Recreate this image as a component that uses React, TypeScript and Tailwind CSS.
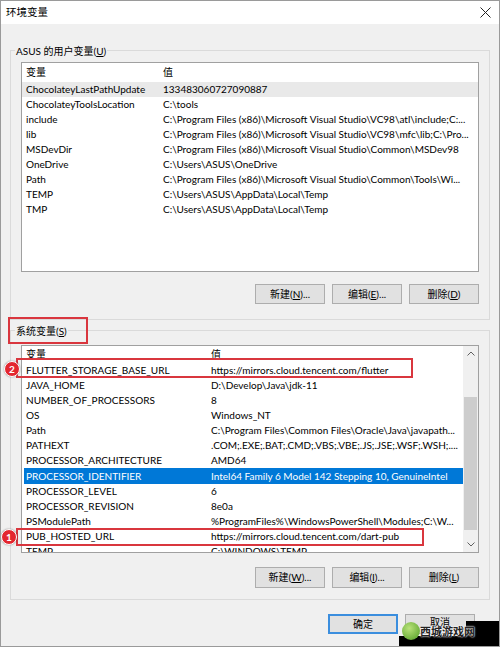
import React from "react";

type Row = [string, string];

const userVars: Row[] = [
  ["ChocolateyLastPathUpdate", "133483060727090887"],
  ["ChocolateyToolsLocation", "C:\\tools"],
  ["include", "C:\\Program Files (x86)\\Microsoft Visual Studio\\VC98\\atl\\include;C:..."],
  ["lib", "C:\\Program Files (x86)\\Microsoft Visual Studio\\VC98\\mfc\\lib;C:\\Pro..."],
  ["MSDevDir", "C:\\Program Files (x86)\\Microsoft Visual Studio\\Common\\MSDev98"],
  ["OneDrive", "C:\\Users\\ASUS\\OneDrive"],
  ["Path", "C:\\Program Files (x86)\\Microsoft Visual Studio\\Common\\Tools\\Wi..."],
  ["TEMP", "C:\\Users\\ASUS\\AppData\\Local\\Temp"],
  ["TMP", "C:\\Users\\ASUS\\AppData\\Local\\Temp"],
];

const sysVars: Row[] = [
  ["FLUTTER_STORAGE_BASE_URL", "https://mirrors.cloud.tencent.com/flutter"],
  ["JAVA_HOME", "D:\\Develop\\Java\\jdk-11"],
  ["NUMBER_OF_PROCESSORS", "8"],
  ["OS", "Windows_NT"],
  ["Path", "C:\\Program Files\\Common Files\\Oracle\\Java\\javapath..."],
  ["PATHEXT", ".COM;.EXE;.BAT;.CMD;.VBS;.VBE;.JS;.JSE;.WSF;.WSH;...."],
  ["PROCESSOR_ARCHITECTURE", "AMD64"],
  ["PROCESSOR_IDENTIFIER", "Intel64 Family 6 Model 142 Stepping 10, GenuineIntel"],
  ["PROCESSOR_LEVEL", "6"],
  ["PROCESSOR_REVISION", "8e0a"],
  ["PSModulePath", "%ProgramFiles%\\WindowsPowerShell\\Modules;C:\\W..."],
  ["PUB_HOSTED_URL", "https://mirrors.cloud.tencent.com/dart-pub"],
  ["TEMP", "C:\\WINDOWS\\TEMP"],
];

function WinButton({
  text,
  hotkey,
  dots,
  tall,
}: {
  text: string;
  hotkey: string;
  dots?: boolean;
  tall?: boolean;
}) {
  return (
    <div
      className={`w-[70px] ${tall ? "h-[21px]" : "h-[20px]"} border border-[#adadad] bg-[#e1e1e1] flex items-center justify-center`}
    >
      <span>
        {text}(<span className="underline">{hotkey}</span>){dots ? "..." : ""}
      </span>
    </div>
  );
}

function Chevron({ down }: { down?: boolean }) {
  return (
    <svg width="8" height="5" viewBox="0 0 8 5">
      <polyline
        points={down ? "0.5,0.5 4,4 7.5,0.5" : "0.5,4.5 4,1 7.5,4.5"}
        fill="none"
        stroke="#606060"
        strokeWidth="1"
      />
    </svg>
  );
}

export default function App() {
  return (
    <div className="relative w-[500px] h-[647px] overflow-hidden bg-[#f0f0f0] border border-[#9a9a9a] text-[10px] text-black font-['Lato','Noto_Sans_CJK_SC',sans-serif]">
      {/* title bar */}
      <div className="h-[23px] bg-white flex items-center justify-between pl-[5px] pr-[8px]">
        <span className="text-[10.5px]">环境变量</span>
        <svg width="11" height="11" viewBox="0 0 11 11">
          <path d="M0.5 0.5 L10.5 10.5 M10.5 0.5 L0.5 10.5" stroke="#222" strokeWidth="1" />
        </svg>
      </div>

      {/* user variables */}
      <div className="ml-[9px] mt-[26px] w-[480px] h-[270px] border border-[#dadada] flex flex-col">
        <div className="-mt-[8px] ml-[4px] px-[1px] h-[16px] leading-[16px] bg-[#f0f0f0] w-fit">
          ASUS 的用户变量(<span className="underline">U</span>)
        </div>
        <div className="mt-[3px] mx-[10px] h-[210px] border border-[#a0a0a0] bg-white overflow-hidden">
          <div className="h-[19px] flex items-center pl-[4px]">
            <span className="w-[137px]">变量</span>
            <span>值</span>
          </div>
          {userVars.map(([k, v], i) => (
            <div
              key={k}
              className={`h-[15px] flex items-center pl-[4px] whitespace-nowrap ${i === 0 ? "bg-[#e9e9e9]" : ""}`}
            >
              <span className="w-[137px] shrink-0">{k}</span>
              <span>{v}</span>
            </div>
          ))}
        </div>
        <div className="mt-[12px] flex justify-end gap-[7px] pr-[10px]">
          <WinButton text="新建" hotkey="N" dots />
          <WinButton text="编辑" hotkey="E" dots />
          <WinButton text="删除" hotkey="D" />
        </div>
      </div>

      {/* system variables */}
      <div className="ml-[9px] mt-[10px] w-[480px] h-[270px] border border-[#dadada] flex flex-col">
        <div className="-mt-[8px] ml-[4px] px-[1px] h-[16px] leading-[16px] bg-[#f0f0f0] w-fit">
          系统变量(<span className="underline">S</span>)
        </div>
        <div className="mt-[6px] mx-[10px] h-[208px] border border-[#a0a0a0] bg-white overflow-hidden flex">
          <div className="flex-1 overflow-hidden">
            <div className="h-[17px] flex items-center pl-[4px]">
              <span className="w-[185px]">变量</span>
              <span>值</span>
            </div>
            {sysVars.map(([k, v]) => {
              const sel = k === "PROCESSOR_IDENTIFIER";
              return (
                <div
                  key={k}
                  className={`ml-[2px] pl-[2px] flex items-center whitespace-nowrap ${sel ? "bg-[#0078d7] text-white h-[16px]" : "h-[15px]"}`}
                >
                  <span className="w-[185px] shrink-0">{k}</span>
                  <span>{v}</span>
                </div>
              );
            })}
          </div>
          <div className="w-[15px] bg-[#f0f0f0] flex flex-col items-center">
            <div className="h-[15px] flex items-center justify-center">
              <Chevron />
            </div>
            <div className="h-[36px]" />
            <div className="w-[13px] h-[133px] bg-[#cdcdcd]" />
            <div className="flex-1" />
            <div className="h-[15px] flex items-center justify-center">
              <Chevron down />
            </div>
          </div>
        </div>
        <div className="mt-[14px] flex justify-end gap-[7px] pr-[10px]">
          <WinButton text="新建" hotkey="W" dots tall />
          <WinButton text="编辑" hotkey="I" dots tall />
          <WinButton text="删除" hotkey="L" tall />
        </div>
      </div>

      {/* dialog buttons */}
      <div className="mt-[14px] flex justify-end gap-[7px] pr-[24px]">
        <div className="w-[70px] h-[20px] border-2 border-[#3b8ede] bg-[#e1e1e1] flex items-center justify-center">
          确定
        </div>
        <div className="w-[70px] h-[20px] border border-[#adadad] bg-[#e1e1e1] flex items-start justify-center leading-[14px]">
          取消
        </div>
      </div>

      {/* red annotations */}
      <div className="absolute left-[7px] top-[316px] w-[80px] h-[27px] border-2 border-[#d9363e]" />
      <div className="absolute left-[15px] top-[357px] w-[397px] h-[20px] border-2 border-[#d9363e]" />
      <div className="absolute left-[15px] top-[527px] w-[408px] h-[18px] border-2 border-[#d9363e]" />
      <div className="absolute left-[3px] top-[360px] w-[16px] h-[16px] rounded-full bg-[#e3262f] border border-white shadow-[0_0_2px_rgba(0,0,0,0.4)] flex items-center justify-center text-white text-[10px] font-bold leading-none">
        2
      </div>
      <div className="absolute left-0 top-[528px] w-[16px] h-[16px] rounded-full bg-[#e3262f] border border-white shadow-[0_0_2px_rgba(0,0,0,0.4)] flex items-center justify-center text-white text-[10px] font-bold leading-none">
        1
      </div>

      {/* watermark */}
      <div className="absolute -right-px -bottom-px w-[34px] h-[26px] bg-black" />
      <div className="absolute -right-px -bottom-px w-[101px] h-[11px] bg-black" />
      <div className="absolute left-[401px] top-[621px] w-[18px] h-[18px] rounded-full bg-[radial-gradient(circle_at_40%_35%,#b9e27a,#4d9a22)]" />
      <div className="absolute left-[419px] top-[624px] text-[11px] font-bold text-[#222] [text-shadow:0_0_2px_#fff,0_0_1px_#fff] leading-[14px]">
        西城游戏网
      </div>
    </div>
  );
}
